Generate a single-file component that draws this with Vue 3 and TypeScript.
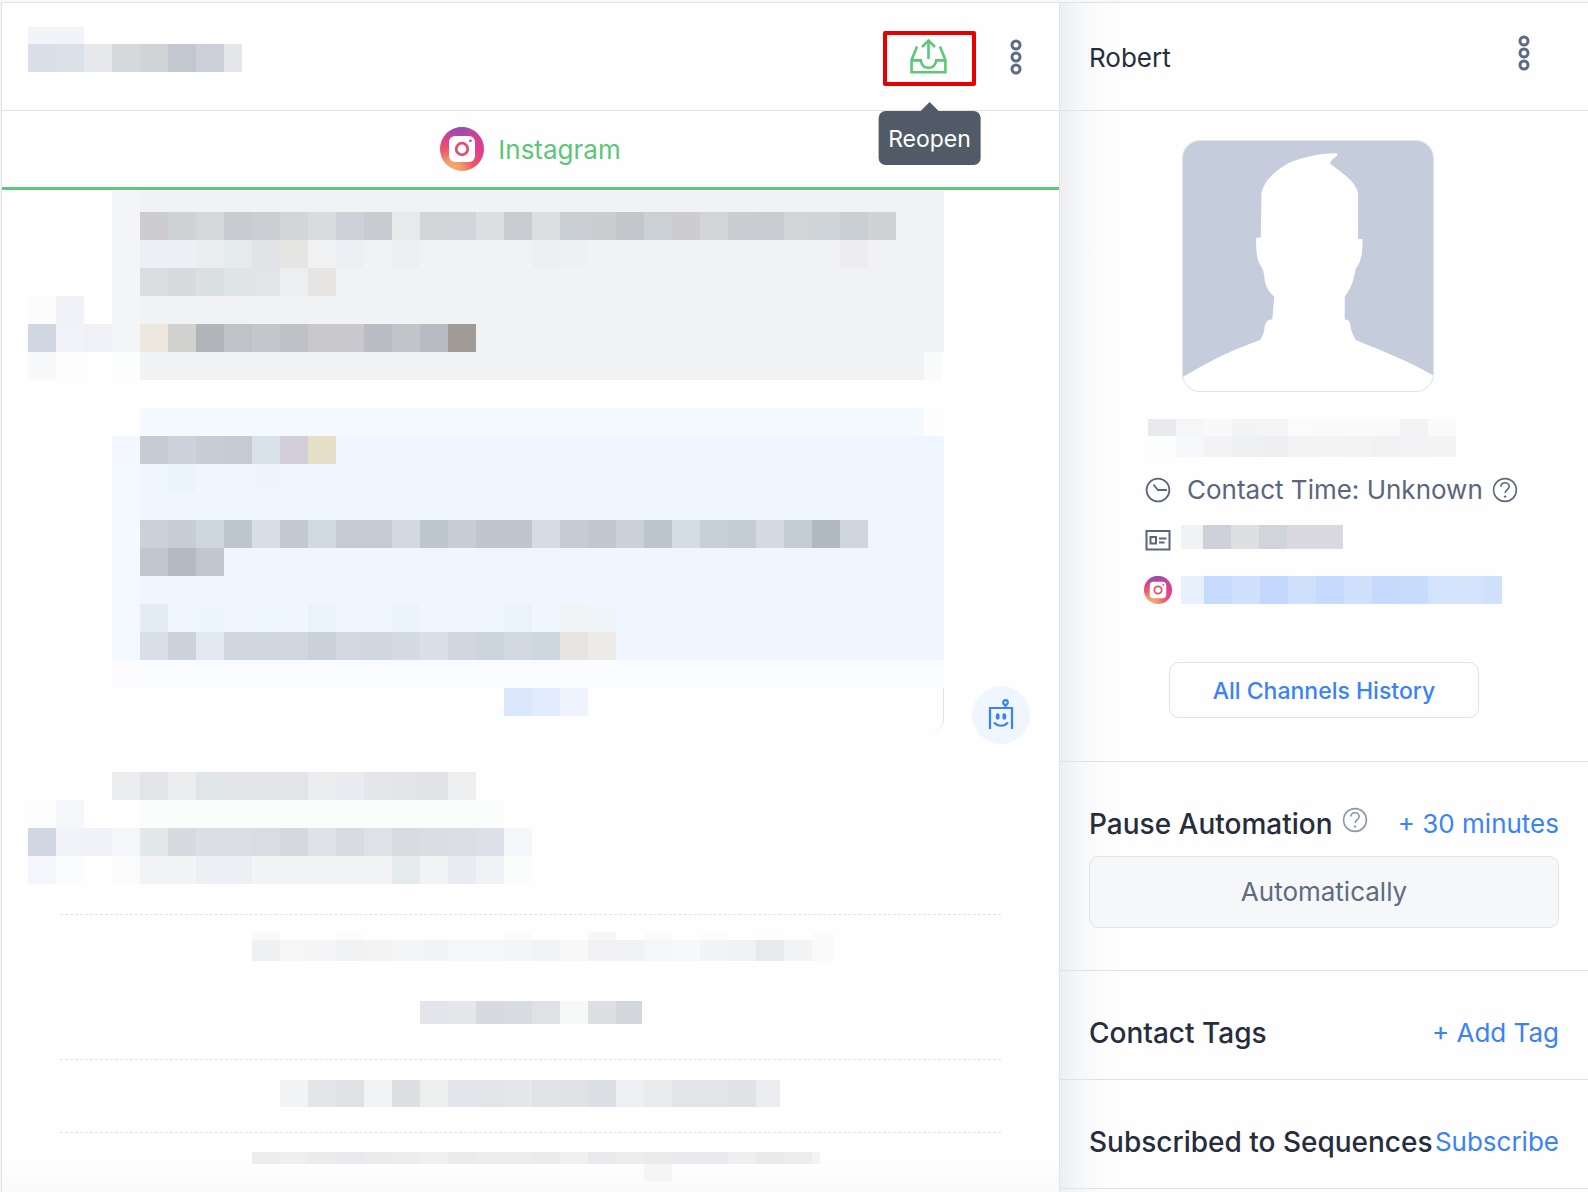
<script setup lang="ts">
import { h, type FunctionalComponent } from 'vue'

interface Cell {
  color: string
  width: number
}

const CELL = 28

// Pattern syntax: "hex", "hex*count", "hex:width"; "-" is an empty cell.
function parse(pattern: string): Cell[] {
  const cells: Cell[] = []
  for (const token of pattern.split(' ').filter(Boolean)) {
    const [head, width] = token.split(':')
    const [hex, count] = head.split('*')
    for (let i = 0; i < Number(count ?? 1); i++) {
      cells.push({ color: hex === '-' ? 'transparent' : `#${hex}`, width: Number(width ?? CELL) })
    }
  }
  return cells
}

// A line of redacted text, drawn as a strip of coloured cells.
const Strip: FunctionalComponent<{ cells: string; height?: number }> = (props) =>
  h(
    'div',
    { class: 'strip', 'aria-hidden': 'true', style: { height: `${props.height ?? CELL}px` } },
    parse(props.cells).map((c) => h('i', { style: { width: `${c.width}px`, background: c.color } })),
  )
Strip.props = ['cells', 'height']

const Instagram: FunctionalComponent = () =>
  h('svg', { viewBox: '0 0 44 44', 'aria-hidden': 'true' }, [
    h('defs', [
      h('radialGradient', { id: 'ig-base', cx: '0.25', cy: '1.02', r: '1.05' }, [
        h('stop', { offset: '0', 'stop-color': '#f6b46f' }),
        h('stop', { offset: '0.25', 'stop-color': '#ef9a6c' }),
        h('stop', { offset: '0.5', 'stop-color': '#e9586a' }),
        h('stop', { offset: '0.75', 'stop-color': '#e43f86' }),
        h('stop', { offset: '1', 'stop-color': '#c8429a' }),
      ]),
      h('radialGradient', { id: 'ig-top', cx: '0.4', cy: '-0.1', r: '0.6' }, [
        h('stop', { offset: '0', 'stop-color': '#7a55b8' }),
        h('stop', { offset: '0.4', 'stop-color': '#9a4dae', 'stop-opacity': '0.8' }),
        h('stop', { offset: '1', 'stop-color': '#c8429a', 'stop-opacity': '0' }),
      ]),
    ]),
    h('circle', { cx: 22, cy: 22, r: 22, fill: 'url(#ig-base)' }),
    h('circle', { cx: 22, cy: 22, r: 22, fill: 'url(#ig-top)' }),
    h('rect', { x: 9, y: 9, width: 26, height: 26, rx: 6, fill: '#fff' }),
    h('circle', { cx: 22, cy: 22, r: 5.8, fill: 'none', stroke: '#e2506f', 'stroke-width': 2.8 }),
    h('circle', { cx: 30.4, cy: 13.8, r: 1.4, fill: '#d9438a' }),
  ])

const Question: FunctionalComponent = () =>
  h('svg', { class: 'question', viewBox: '0 0 26 26', fill: 'none', stroke: 'currentColor', 'aria-hidden': 'true' }, [
    h('circle', { cx: 13, cy: 13, r: 11.4, 'stroke-width': 1.6 }),
    h('path', { d: 'M8.8 9.6C9 7 10.8 5.8 13 5.8s4.2 1.4 4.2 3.7c0 3-4 3.2-4 6.6', 'stroke-width': 1.6 }),
    h('circle', { cx: 13.1, cy: 19.6, r: 1.2, fill: 'currentColor', stroke: 'none' }),
  ])

const Kebab: FunctionalComponent = () =>
  h('svg', { viewBox: '0 0 12 36', fill: 'none', stroke: '#5f6b83', 'stroke-width': 3, 'aria-hidden': 'true' }, [
    h('circle', { cx: 6, cy: 6, r: 4 }),
    h('circle', { cx: 6, cy: 18, r: 4 }),
    h('circle', { cx: 6, cy: 30, r: 4 }),
  ])

const greyMessage: string[] = [
  'f4f5f7 cdcdd1 cfd3d6 d6d7db c9cbd0 cbced3 d2d6d9 d9dbdf ced1d7 c9cbd1 e7e9ea d2d6d8 d1d5da dddfe3 c9cdd1 dddee2 cacfd3 cccdd1 c3c7cc cbd0d4 ccccd1 d2d4d8 cacdd2 cbccd1 d3d4d8 cfd4d9 cacfd3 cfd3d5',
  'f4f5f7 edeff4*2 ebedf1 e5eaed e1e3e7 e5e5e3 f0f1f3 edeff4 - eeeff2 -*4 eeeff1 eff0f3 -*9 ededf0',
  'f4f5f7 dcdde1 d9dade dadfe1 dfe4e7 e2e4e8 edeeef e6e5e3',
  'f4f5f7',
  'f4f5f7 ede7e0 d1d1d0 b1b5ba bfc3c8 c3c6cb bec2c7 c8c8cd*2 b9bdc3 c1c5ca b8bcc2 a09b96',
  'fcfefd -*28 f9fafb:17 fefefe:40',
]

const blueMessage: string[] = [
  'f4f7fe c5ccd4 ccd3dc c6cdd4 c4cbd3 d9e1e9 d4ceda e6e0c8',
  'f3f9fe - ebf4fc -*2 eef5fd',
  'f3f9fe',
  'f3f9fe cad1d9 c7ced6 ced6de bdc5cd d7dee7 c2c9d2 d1d9e1 c4cbd3*2 d2d9e2 bec6cf c7ced7 bfc6ce*2 d5dce4 c5ccd4 c0c7d0 cad1da bcc4cc d4dce4 c7cfd7 c4ccd4 d4dbe4 c4ccd4 b1b9c2 cfd6df',
  'f3f9fe c0c7cf b3bac2 c0c7cf',
  'f3f9fe',
  'f3f9fe e3ebf4 - edf5fd - eef6fe - eaf3fb -*2 ebf4fc -*3 eaf2fa - f0f4f7 eff5f8',
  'f3f9fe d9dfe8 ccd3db e2e9f2 d0d7df*3 cad1d9 d1d8e1 d0d7df d4dae3 d9e0e9 d0d7e0 cdd5dc d2d9e1 ced6de e5e4e0 ecebe8',
]

const shortMessage: string[] = [
  '-*3 ecedef e3e4e8 ecedef e0e5e8 e4e5e9*2 e3e4e8 ecedee ebecf1 e5e6ea e3e4e8 e2e3e7 edeeef',
  'fdfdfe f4f6fa -*2 fafdfb*13',
  'd0d7e3 f2f3f9 f1f2f7 f5f6f9 e3e8eb d7dadf dbdee3*2 d9dce1 d4d7dc dfe2e7 d8dbdf dee1e6 d8dce1 dadde2 dbdee3 dde0e6 f6f7fb',
  'f4f6fc fbfcff - fbfbfb f1f3f5*2 edeff4*2 f1f3f5*5 e5eaed f1f3f5 ebecf2 f1f2f5 fafdfb',
]
</script>

<template>
  <div class="page">
    <div class="rail" aria-hidden="true"></div>

    <main class="chat">
      <header class="bar">
        <div class="contact">
          <Strip :height="17" cells="f3f4f9*2" />
          <Strip cells="d9dee9 dae1e8 e7e8eb d6d9dc d0d4d6 c3c8d0 cdd0da e6e7ea:18" />
        </div>
        <div class="actions">
          <div class="reopen-wrap">
            <button class="reopen" type="button" aria-label="Reopen" aria-describedby="reopen-tip">
              <svg viewBox="0 0 37 36" width="37" height="36" fill="none" stroke="#5bc877" stroke-width="2.6" aria-hidden="true">
                <path d="M7 8.5 1.6 22v12.2h33.8V22L30 8.5" />
                <path d="M1.6 22.4h9.2c.6 4.6 3.6 7.4 7.7 7.4s7.1-2.8 7.7-7.4h9.2" />
                <path d="M18.5 21V3M12 9l6.5-6.5L25 9" />
              </svg>
            </button>
            <span id="reopen-tip" class="tip" role="tooltip">Reopen</span>
          </div>
          <button class="kebab" type="button" aria-label="Conversation menu"><Kebab /></button>
        </div>
      </header>

      <nav class="tabs">
        <button class="tab" type="button"><Instagram /><span>Instagram</span></button>
      </nav>

      <section class="thread">
        <article class="message">
          <div class="sender">
            <Strip cells="fcfcfc f1f2f8" />
            <Strip cells="d0d7e3 f2f3f9 f0f1f7" />
            <Strip cells="f8f9fb fdfdfe" />
          </div>
          <div class="bubble grey">
            <Strip :height="21" cells="f4f5f7" />
            <Strip v-for="(row, i) in greyMessage" :key="i" :cells="row" />
          </div>
          <div class="bot-slot"></div>
        </article>

        <article class="message spaced">
          <div class="sender"></div>
          <div class="stack">
            <div class="bubble pale"><Strip cells="fefefe -*28 fdfdfe:40" /></div>
            <div class="bubble blue"><Strip v-for="(row, i) in blueMessage" :key="i" :cells="row" /></div>
            <div class="bubble haze"><Strip cells="fcfcff" /></div>
            <div class="reply">
              <Strip cells="-*14 dbe7fd e3ecff f0f4fe" />
            </div>
          </div>
          <div class="bot-slot">
            <span class="bot">
              <svg viewBox="0 0 26 32" width="26" height="32" fill="none" stroke="#3b82f6" stroke-width="2.2" aria-hidden="true">
                <path d="M2 31V10h22v21" />
                <circle cx="17.5" cy="4.5" r="2.3" />
                <path d="M17.5 7v3M6 24.500c4 4.300 10 4.300 14 0" />
                <ellipse cx="9.700" cy="18.500" rx="1.900" ry="3.200" fill="#3b82f6" stroke="none" />
                <ellipse cx="16.300" cy="18.500" rx="1.900" ry="3.200" fill="#3b82f6" stroke="none" />
              </svg>
            </span>
          </div>
        </article>

        <article class="plain">
          <Strip v-for="(row, i) in shortMessage" :key="i" :cells="row" />
        </article>

        <hr />
        <div class="event first">
          <Strip :height="8" cells="-*8 f9f9f9 - fefefe fcfcfc -*5 fbfbfb -*2 f7f7fa - fbfbfb - fbfdfc - fbfefd - fbfbfb:22" />
          <Strip :height="21" cells="-*8 eff0f2 f6f6f6 f5f5f7 f1f2f4 f4f3f4 f4f5f6 f3f4f6 f5f6f7*2 f4f5f6 f2f3f5 f8f8f8 f1f1f3 f0f1f3 f5f6f8 f7f8fa f3f4f5 f1f2f4 e8e9ed f3f4f6 fafafa:22" />
          <div class="event-gap"></div>
          <Strip :height="23" cells="-*14 e4e5ea e6e7eb d9dae0 d8dce1 e0e1e5 f7f8f8 dedfe3 d3d7db:26" />
        </div>
        <hr />
        <div class="event second">
          <Strip :height="27" cells="-*9 f3f4f6 e4e5e9 e0e1e5 f2f3f5 dedfe3 edeeee e4e5ea e3e4e8 e6e7eb e2e3e7 e1e2e6 dcdfe3 eff0f3 eaebec e3e4e8*2 e1e2e6 ecedf1:24" />
        </div>
        <hr />
        <div class="event last">
          <Strip :height="12" cells="-*8 eceded eeefef ececed e8e9ed ebebec ededee f0f0f1 ebebec ededee*2 ebebec f0f0f1 e8e9ed ededee eaebec e9eaee*2 eeeff1 eaeaeb ededee f4f4f4:8" />
          <Strip :height="17" cells="-*22 f5f5f6" />
        </div>
      </section>
    </main>

    <aside class="side">
      <header class="bar">
        <h1>Robert</h1>
        <button class="kebab" type="button" aria-label="Contact menu"><Kebab /></button>
      </header>

      <section class="profile">
        <div class="photo">
          <svg class="avatar" viewBox="0 0 252 252" role="img" aria-label="Contact photo">
            <rect width="252" height="252" fill="#c5ccdc" />
            <path
              fill="#fff"
              d="M155 12.500C157 13 155 15 152 17.500C149 20 147.500 22 149 23.500C160 32 176 42 176.500 54V98.500L181 99C181 108 180.500 114 179 119C178 124 176 126 174 129C172 142 168.500 150 163 157V180C168 180 168.500 183 169 188C170 193 172 196 174 200.500C202 212 228 222 252 236V252H0V238C24 223 50 210 78 200.500C80 196 81.500 194 82 190C82.500 184 84 180 90 180L92 157C85 151 82.500 144 82 137C81.500 132 80 128 79 127C75 121 74.500 116 74 110L73.500 98L78.500 97L79 54C80 42 92 30 107 22C124 15 144 12 155 12.500Z"
            />
          </svg>
        </div>
        <div class="name">
          <Strip :height="17" cells="e8e9ec f5f6f8 f8f9fb f3f4f5 f5f5f7 fbfbfb fafafa*3 f2f3f4 fafafa" />
          <Strip :height="21" cells="fcfefd f7f8fb f3f3f5 eff0f2 eeeff0 f3f3f5 f4f4f6 f2f3f5 f0f1f3 f3f3f5 f4f4f5" />
        </div>
        <ul class="facts">
          <li>
            <svg class="fact-icon" viewBox="0 0 26 26" fill="none" stroke="#5b667d" stroke-width="1.8" aria-hidden="true">
              <circle cx="13" cy="13" r="11.400" />
              <path d="M8.500 7.500l4.500 5.500h9" />
            </svg>
            <span class="time">Contact Time: Unknown</span>
            <Question />
          </li>
          <li>
            <svg class="fact-icon" viewBox="0 0 26 26" fill="none" stroke="#5b667d" stroke-width="2" aria-hidden="true">
              <path d="M1.500 4h23v18.500h-23zM5.500 10h5.500v6.500H5.500zM14 11.500h7.500M14 15.500h5.500" />
            </svg>
            <div class="contact-id">
              <Strip :height="24" cells="f1f2f3:22 cfd1da dedfe2 d1d4d9 d9d9df*2" />
            </div>
          </li>
          <li>
            <Instagram />
            <Strip cells="e8f0fe:23 c6dbfd cfe1fe c3d7ff cfe0fd c5dafe cfe1fe c5dafd c8ddfe d3e3fd d5e3fd cfe1fc:18" />
          </li>
        </ul>
        <button class="history" type="button">All Channels History</button>
      </section>

      <section class="block pause">
        <div class="line">
          <h2>Pause Automation</h2>
          <button class="help" type="button" aria-label="About pausing automation"><Question /></button>
          <button class="link" type="button">+ 30 minutes</button>
        </div>
        <button class="auto" type="button">Automatically</button>
      </section>

      <section class="block">
        <div class="line">
          <h2>Contact Tags</h2>
          <button class="link" type="button">+ Add Tag</button>
        </div>
      </section>

      <section class="block">
        <div class="line">
          <h2>Subscribed to Sequences</h2>
          <button class="link" type="button">Subscribe</button>
        </div>
      </section>
    </aside>
  </div>
</template>

<style>
body {
  margin: 0;
  background: #fefefe;
}
</style>

<style scoped>
.page {
  display: flex;
  box-sizing: border-box;
  min-height: 100vh;
  border-top: 2px solid #f7f8f8;
  font-family: Inter, "Liberation Sans", sans-serif;
  font-size: 26px;
  line-height: 32px;
  color: #262d3d;
}
button {
  margin: 0;
  padding: 0;
  border: 0;
  background: none;
  font: inherit;
  color: inherit;
  cursor: pointer;
}
h1,
h2 {
  margin: 0;
  font-size: inherit;
  font-weight: 400;
  white-space: nowrap;
}
h1 {
  padding-top: 2px;
}
h2 {
  font-size: 28px;
  font-weight: 500;
}
:deep(.strip) {
  display: flex;
  overflow: hidden;
}
:deep(.strip i) {
  flex: none;
}
:deep(svg) {
  display: block;
  flex: none;
}
.rail {
  flex: none;
  box-sizing: border-box;
  width: 2px;
  background: #f3f4fa;
  border-right: 1px solid #e0e2ea;
}
.chat {
  display: flex;
  flex-direction: column;
  flex: 1;
  min-width: 0;
  border-top: 1px solid #e0e2ea;
  border-right: 1px solid #e0e2ea;
}
.bar {
  display: flex;
  align-items: center;
  box-sizing: border-box;
  height: 108px;
  border-bottom: 1px solid #e0e2ea;
}
.contact {
  align-self: flex-start;
  padding: 24px 0 0 26px;
}
.actions {
  display: flex;
  align-items: center;
  gap: 34px;
  margin: 0 37px 0 auto;
}
.reopen-wrap {
  position: relative;
  margin-top: 4px;
}
.reopen {
  display: flex;
  align-items: center;
  justify-content: center;
  box-sizing: border-box;
  width: 93px;
  height: 55px;
  padding: 0 3px 6px 0;
  border: 4px solid #e60000;
  border-radius: 2px;
}
.tip {
  position: absolute;
  top: 80px;
  left: 50%;
  z-index: 1;
  transform: translateX(-50%);
  padding: 12px 10px 10px;
  border-radius: 7px;
  background: #515b67;
  color: #fff;
  font-size: 23px;
}
.tip::before {
  content: "";
  position: absolute;
  bottom: 100%;
  left: 50%;
  margin-left: -9px;
  border: 9px solid transparent;
  border-top-width: 0;
  border-bottom-color: #515b67;
}
.kebab :deep(svg) {
  width: 12px;
  height: 36px;
}
.tabs {
  display: flex;
  justify-content: center;
  height: 76px;
  border-bottom: 3px solid #5fc67c;
  box-shadow: 0 1px 0 #e0e2e4;
}
.tab {
  display: flex;
  align-items: center;
  gap: 14px;
  color: #5ac777;
}
.tab span {
  padding-top: 2px;
}
.tab :deep(svg) {
  width: 44px;
  height: 44px;
}
.thread {
  flex: 1;
  padding-top: 1px;
  background: linear-gradient(to top, #f9f9f9, #fefefe 28px);
}
.message {
  display: flex;
  padding-left: 26px;
}
.message.spaced {
  padding-top: 28px;
}
.sender {
  display: flex;
  flex-direction: column;
  justify-content: flex-end;
  flex: none;
  width: 84px;
}
.stack,
.bubble.grey {
  flex: 1;
  min-width: 0;
}
.bubble {
  overflow: hidden;
}
.grey {
  background: #f1f2f4;
  border-radius: 5px 0 0 0;
}
.pale {
  background: #f4faff;
}
.blue {
  background: #eff6ff;
  border-radius: 0 3px 0 0;
}
.haze {
  background: #fafbff;
}
.reply {
  height: 42px;
  margin-bottom: 14px;
  border-right: 1px solid #e0e2ea;
  border-radius: 0 0 10px 0;
}
.bot-slot {
  display: flex;
  align-items: flex-end;
  flex: none;
  box-sizing: border-box;
  width: 115px;
  padding-left: 28px;
}
.bot {
  display: flex;
  justify-content: center;
  box-sizing: border-box;
  width: 58px;
  height: 58px;
  padding-top: 12px;
  border-radius: 50%;
  background: #eff6ff;
}
.plain {
  padding: 28px 0 30px 26px;
}
hr {
  margin: 0 58px;
  border: 0;
  border-top: 1px dashed #e1e2e6;
}
.event {
  padding-left: 26px;
}
.event.first {
  padding-top: 17px;
  padding-bottom: 35px;
}
.event-gap {
  height: 40px;
}
.event.second {
  padding-top: 20px;
  padding-bottom: 25px;
}
.event.last {
  padding-top: 19px;
}
.side {
  box-sizing: border-box;
  flex: none;
  width: 33.25%;
  border-top: 1px solid #e0e2ea;
  background: linear-gradient(to right, #eeeff2, #f6f7f8 20px, #fcfcfd 42px, #fefefe 60px);
}
.side .bar {
  padding: 0 58px 0 29px;
}
.side .kebab {
  margin: 0 0 8px auto;
}
.profile {
  padding-top: 29px;
}
.photo {
  padding-right: 32px;
}
.avatar {
  box-sizing: border-box;
  width: 252px;
  height: 252px;
  margin: 0 auto;
  border: 1px solid #e0e3ea;
  border-radius: 18px;
}
.name {
  padding: 27px 0 0 88px;
}
.facts {
  display: flex;
  flex-direction: column;
  margin: 0;
  padding: 8px 0 0 84px;
  list-style: none;
  color: #5b667d;
}
.facts li {
  display: flex;
  align-items: center;
  gap: 9px;
  height: 50px;
}
.facts li :deep(svg) {
  width: 28px;
  height: 28px;
}
.facts li .fact-icon,
.facts li :deep(.question) {
  width: 26px;
  height: 26px;
  margin-left: 1px;
}
.facts li .fact-icon {
  margin-right: 1px;
}
.facts li :deep(.question) {
  margin-left: 0;
}
.contact-id {
  padding-bottom: 6px;
}
.time {
  padding-left: 6px;
  white-space: nowrap;
}
.history {
  display: block;
  box-sizing: border-box;
  width: 310px;
  height: 56px;
  margin: 47px auto 43px;
  padding-top: 2px;
  border: 1px solid #e0e2e8;
  border-radius: 10px;
  background: #fefefe;
  color: #3b82f6;
  font-size: 23px;
  font-weight: 500;
}
.block {
  padding: 46px 29px 30px;
  border-top: 1px solid #e0e2e8;
}
.block:last-child {
  border-bottom: 1px solid #e0e2e8;
}
.block.pause {
  padding-bottom: 42px;
}
.line {
  display: flex;
  align-items: center;
  height: 32px;
}
.link {
  margin-left: auto;
  color: #3b82f6;
  white-space: nowrap;
}
.help {
  margin: 0 0 8px 9px;
  color: #8a96a8;
}
.help :deep(svg) {
  width: 26px;
  height: 26px;
}
.auto {
  display: block;
  box-sizing: border-box;
  width: 100%;
  height: 72px;
  margin-top: 16px;
  border: 1px solid #e0e3e8;
  border-radius: 10px;
  background: #f6f7f9;
  color: #5f6b80;
}
</style>
